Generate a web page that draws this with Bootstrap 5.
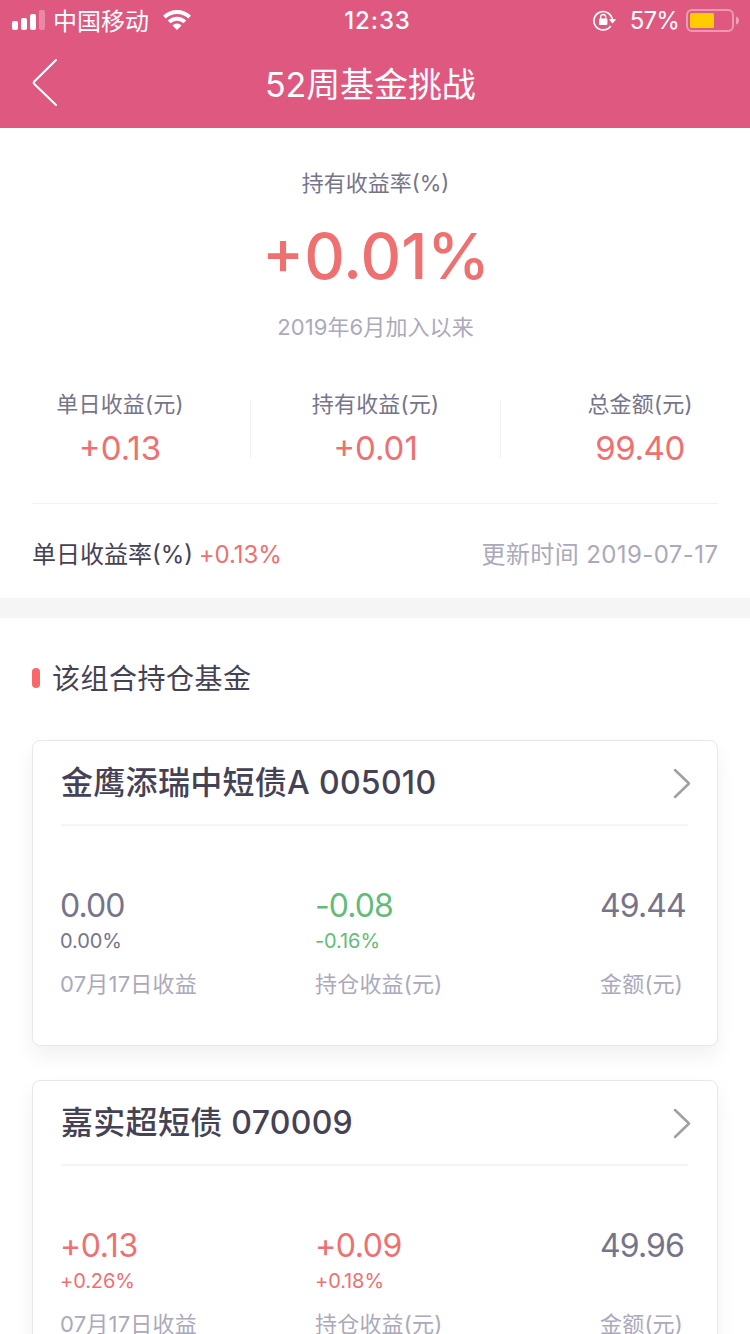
<!DOCTYPE html>
<html lang="zh-CN">
<head>
<meta charset="utf-8">
<meta name="viewport" content="width=device-width, initial-scale=1">
<title>52周基金挑战</title>
<link href="https://cdn.jsdelivr.net/npm/bootstrap@5.3.0/dist/css/bootstrap.min.css" rel="stylesheet">
<style>
:root{--pink:#df5880;--red:#ee7070;--ink:#444254;--mid:#76748a;--pale:#aba9bb;--green:#63bb78}
html,body{height:1334px;overflow:hidden}
body{font-family:Inter,"Noto Sans CJK SC",sans-serif;font-weight:400;color:var(--ink);background:#fff;font-size:22px;line-height:32px;white-space:nowrap}
.top-area{background:var(--pink);height:128px}
.status{height:40px;font-size:24px;line-height:42px}
.status svg,.title-bar svg,.fund svg{display:block;flex:none}
.side{width:300px}
.bars{margin-left:12px}
.carrier{margin:3px 14px 0 7px}
.clock{font-weight:500;letter-spacing:.9px;margin-left:5px}
.charge{letter-spacing:-.8px;margin:2px 7px 0 13px}
.title-bar{height:88px;padding-left:32px}
.title-bar h1{font-size:34px;line-height:90px;font-weight:400;margin:0 0 0 208px;letter-spacing:-.1px}
.red{color:var(--red)}.green{color:var(--green)}.mid{color:var(--mid)}.pale{color:var(--pale)}
.summary{height:470px}
.summary-label{margin-top:39px;padding-left:1px}
.rate{font-size:63px;font-weight:500;line-height:76px;margin-top:19px;padding-left:2px}
.since{margin-top:17px;letter-spacing:.1px;padding-left:1px}
.stats{margin-top:57px}
.stat{width:250px;height:58px}
.stat+.stat{border-left:1px solid #f2f2f2}
.stat>div{margin-top:-12px;letter-spacing:.2px}
.stat:first-child{padding-right:10px}
.stat:last-child{padding-left:29px}
.stat b{display:block;font-weight:400;font-size:33px;line-height:44px;margin-top:6px}
.stat:last-child b{letter-spacing:-.4px}
.daily{margin:0 32px;border-top:1px solid #f2f2f2;height:95px;padding-top:8px;font-size:24px}
.day-pct{margin-left:-1px;letter-spacing:-.1px}
.updated{letter-spacing:.4px;margin-right:-.4px}
.gap-bar{height:20px;background:#f5f5f5}
.section-head{height:122px;padding-left:32px;font-size:28px;letter-spacing:.5px}
.tick{width:8px;height:20px;border-radius:4px;background:#fa6768;margin:-2px 12px 0 0}
.fund{margin:0 32px 34px;height:306px;border:1px solid #e8e8ea;border-radius:8px;box-shadow:0 10px 20px rgba(0,0,0,.06);padding:0 29px 0 28px;background:#fff}
.fund header{height:85px;border-bottom:2px solid #f5f5f5}
.fund h2{font-size:32px;font-weight:500;line-height:40px;margin:1px 0 0;letter-spacing:.3px}
.fund header svg{margin-right:-3px}
.figures{display:grid;grid-template-columns:255px 285px auto;padding-top:60px;margin-left:-1px}
.num{font-size:32px;line-height:40px}
.num.mid,.num.green{letter-spacing:-.9px}
.num.red{letter-spacing:-.4px}
.pct{font-size:20px;line-height:32px;height:31px;margin-top:-1px;letter-spacing:-.1px}
.cap{line-height:32px;margin-top:12px;letter-spacing:.2px}
</style>
</head>
<body>
<div class="top-area text-white">
  <div class="status d-flex justify-content-between">
    <div class="side d-flex align-items-center">
      <svg class="bars" width="34" height="40" viewBox="0 0 34 40" fill="#fff"><rect x="0" y="21" width="6" height="9" rx="2"/><rect x="9" y="18" width="6" height="12" rx="2"/><rect x="18" y="14" width="6" height="16" rx="2"/><rect x="27" y="10" width="6" height="20" rx="2" opacity=".3"/></svg>
      <span class="carrier">中国移动</span>
      <svg width="28" height="40" viewBox="0 0 28 40" fill="#fff"><path d="M0 15.7a20 20 0 0 1 28 0l-2.8 2.8a16 16 0 0 0-22.4 0z"/><path d="M4.7 20.5a13.3 13.3 0 0 1 18.6 0l-2.8 2.8a9.3 9.3 0 0 0-13 0z"/><path d="M14 30l-4.6-4.6a6.5 6.5 0 0 1 9.2 0z"/></svg>
    </div>
    <span class="clock">12:33</span>
    <div class="side d-flex align-items-center justify-content-end">
      <svg width="24" height="40" viewBox="0 0 24 40"><path d="M17.7 26A9.2 9.2 0 1 1 19.3 20" fill="none" stroke="#fff" stroke-width="1.7"/><path d="M15.8 19.2h7.4l-3.7 4.3z" fill="#fff"/><rect x="6" y="18.5" width="8.4" height="6.5" rx="1" fill="#fff"/><path d="M7.7 19v-2a2.5 2.5 0 0 1 5 0v2" fill="none" stroke="#fff" stroke-width="1.3"/></svg>
      <span class="charge">57%</span>
      <svg width="64" height="40" viewBox="0 0 64 40"><rect x="1" y="10" width="46" height="21" rx="5" fill="none" stroke="#fff" stroke-opacity=".4" stroke-width="2"/><rect x="4" y="13" width="24" height="15" rx="1.5" fill="#fc0"/><path d="M50 16.5q3 1 3 4t-3 4z" fill="#fff" opacity=".45"/></svg>
    </div>
  </div>
  <div class="title-bar d-flex">
    <svg width="25" height="88" viewBox="0 0 25 88" fill="none" stroke="#fff" stroke-width="2.1" stroke-linecap="round" stroke-linejoin="round"><path d="M24 20L2.3 41.5q-1 1.2 0 2.4L24 65"/></svg>
    <h1>52周基金挑战</h1>
  </div>
</div>

<section class="summary text-center d-flex flex-column">
  <div class="summary-label mid">持有收益率(%)</div>
  <div class="rate red">+0.01%</div>
  <div class="since pale">2019年6月加入以来</div>
  <div class="stats d-flex">
    <div class="stat"><div class="mid">单日收益(元)</div><b class="red">+0.13</b></div>
    <div class="stat"><div class="mid">持有收益(元)</div><b class="red">+0.01</b></div>
    <div class="stat"><div class="mid">总金额(元)</div><b class="red">99.40</b></div>
  </div>
  <div class="daily d-flex align-items-center justify-content-between mt-auto">
    <span>单日收益率(%) <span class="red day-pct">+0.13%</span></span>
    <span class="pale updated">更新时间 2019-07-17</span>
  </div>
</section>
<div class="gap-bar"></div>

<div class="section-head d-flex align-items-center"><span class="tick"></span><span>该组合持仓基金</span></div>

<article class="fund">
  <header class="d-flex align-items-center justify-content-between"><h2>金鹰添瑞中短债A 005010</h2>
    <svg width="18" height="32" viewBox="0 0 18 32" fill="none" stroke="#a0a0a0" stroke-width="2.5" stroke-linecap="round" stroke-linejoin="round"><path d="M2 3l14 13.5L2 30"/></svg></header>
  <div class="figures">
    <div><div class="num mid">0.00</div><div class="pct mid">0.00%</div><div class="cap pale">07月17日收益</div></div>
    <div><div class="num green">-0.08</div><div class="pct green">-0.16%</div><div class="cap pale">持仓收益(元)</div></div>
    <div><div class="num mid">49.44</div><div class="pct"></div><div class="cap pale">金额(元)</div></div>
  </div>
</article>

<article class="fund">
  <header class="d-flex align-items-center justify-content-between"><h2>嘉实超短债 070009</h2>
    <svg width="18" height="32" viewBox="0 0 18 32" fill="none" stroke="#a0a0a0" stroke-width="2.5" stroke-linecap="round" stroke-linejoin="round"><path d="M2 3l14 13.5L2 30"/></svg></header>
  <div class="figures">
    <div><div class="num red">+0.13</div><div class="pct red">+0.26%</div><div class="cap pale">07月17日收益</div></div>
    <div><div class="num red">+0.09</div><div class="pct red">+0.18%</div><div class="cap pale">持仓收益(元)</div></div>
    <div><div class="num mid">49.96</div><div class="pct"></div><div class="cap pale">金额(元)</div></div>
  </div>
</article>
<script src="https://cdn.jsdelivr.net/npm/bootstrap@5.3.0/dist/js/bootstrap.bundle.min.js"></script>
</body>
</html>
